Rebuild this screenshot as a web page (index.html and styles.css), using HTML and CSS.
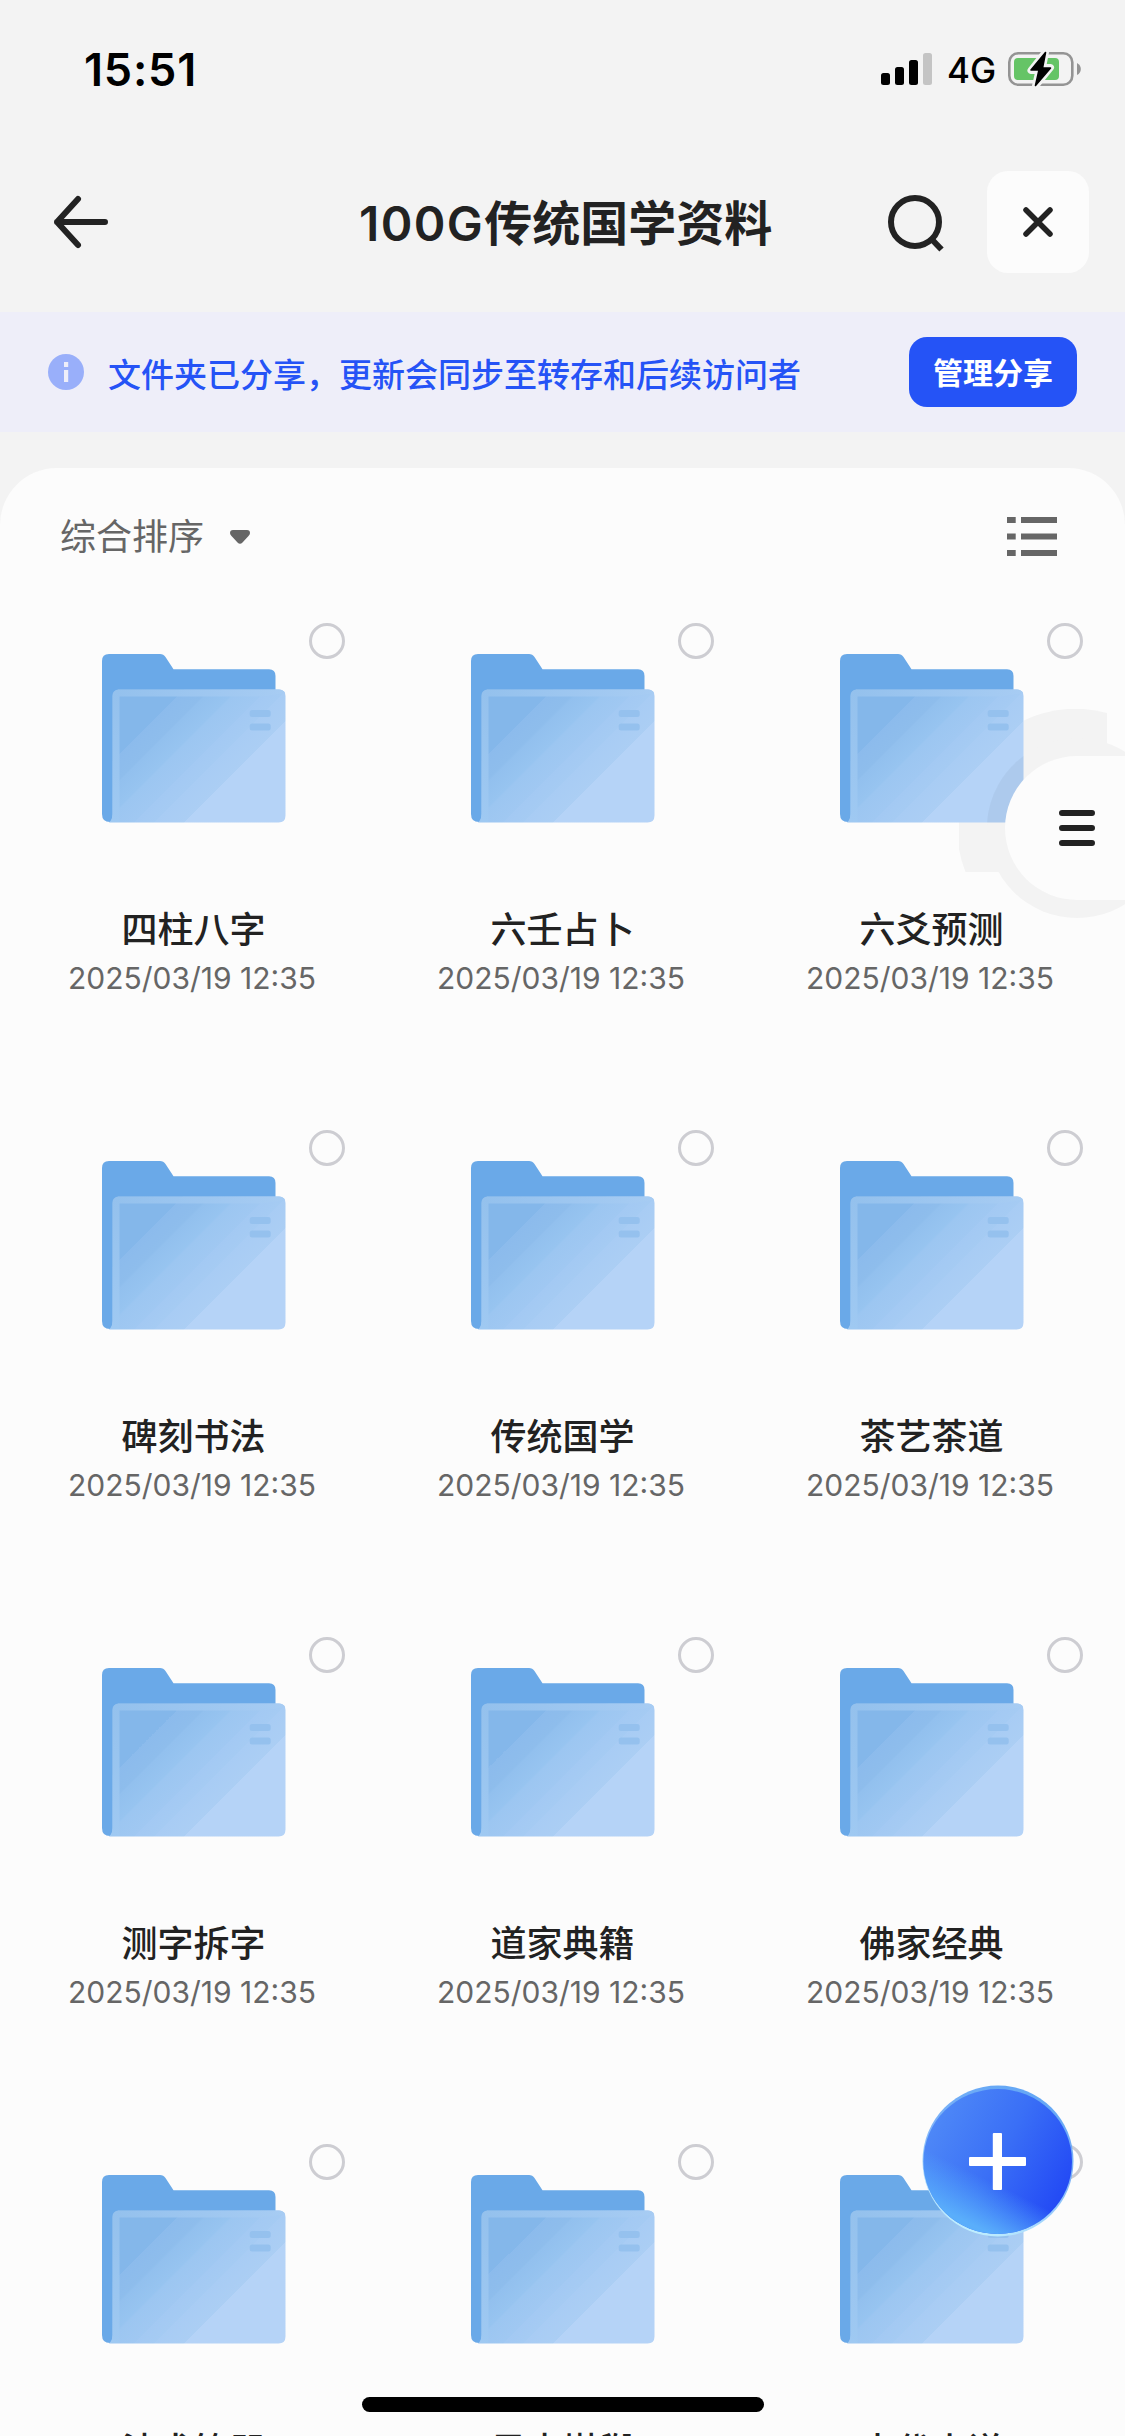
FILE: index.html
```html
<!DOCTYPE html>
<html lang="zh-CN">
<head>
<meta charset="utf-8">
<title>100G传统国学资料</title>
<link rel="stylesheet" href="styles.css">
</head>
<body>
<svg width="0" height="0" class="defs">
  <defs>
    <linearGradient id="front" gradientUnits="userSpaceOnUse" x1="25" y1="25" x2="150" y2="150">
      <stop offset="0" stop-color="#84b7ea"/><stop offset=".268" stop-color="#84b7ea"/>
      <stop offset=".268" stop-color="#8cbbec"/><stop offset=".37" stop-color="#8ebdec"/>
      <stop offset=".38" stop-color="#92c0ee"/><stop offset=".48" stop-color="#97c4f0"/>
      <stop offset=".49" stop-color="#9cc6f1"/><stop offset=".6" stop-color="#a0c8f2"/>
      <stop offset=".6" stop-color="#a3c9f3"/><stop offset=".68" stop-color="#a5cbf3"/>
      <stop offset=".68" stop-color="#a8ccf4"/><stop offset=".8" stop-color="#abcef4"/>
      <stop offset=".804" stop-color="#b5d3f7"/><stop offset="1" stop-color="#b5d3f7"/>
    </linearGradient>
    <linearGradient id="edgeLeft" x1="0" y1="0" x2="0" y2="1">
      <stop offset="0" stop-color="#94c1ed"/><stop offset="1" stop-color="#9fc9f2"/>
    </linearGradient>
    <linearGradient id="edgeTop" x1="0" y1="0" x2="1" y2="0">
      <stop offset="0" stop-color="#94c1ed"/><stop offset="1" stop-color="#a7ccf3"/>
    </linearGradient>
    <symbol id="folder" viewBox="0 0 184 169">
      <path fill="#6aa9e8" d="M7 0H58Q61.500 0 63.500 3L71.500 15.300H167Q173.500 15.300 173.500 22V60H20V161Q17 168 8 168Q0 168 0 160V7Q0 0 7 0Z"/>
      <path fill="url(#front)" d="M17 35.500H177Q183.500 35.500 183.500 42V161.500Q183.500 168.500 176.500 168.500H7Q10.500 166 10.500 160V42Q10.500 35.500 17 35.500Z"/>
      <path fill="url(#edgeTop)" d="M17 35.500H177Q181 35.500 183 39L160 42.500H13Q13 36.500 17 35.500Z"/>
      <path fill="url(#edgeLeft)" d="M10.500 42Q10.500 36 17 35.500L17.500 42V168H8Q10.500 165 10.500 160Z"/>
      <rect x="147.700" y="56" width="21" height="7" rx="2.500" fill="#95c1ee"/>
      <rect x="147.700" y="69.500" width="21" height="7" rx="2.500" fill="#95c1ee"/>
    </symbol>
    <linearGradient id="fabFill" x1="0.050" y1="0.250" x2="0.950" y2="0.720">
      <stop offset="0" stop-color="#4e88f7"/><stop offset=".5" stop-color="#3a6ff6"/><stop offset="1" stop-color="#234af5"/>
    </linearGradient>
    <linearGradient id="fabGlow" x1=".54" y1=".68" x2=".38" y2="1">
      <stop offset="0" stop-color="#56aefb" stop-opacity="0"/><stop offset=".9" stop-color="#5aaefb"/>
    </linearGradient>
    <linearGradient id="fabRim" x1=".7" y1="0" x2=".3" y2="1">
      <stop offset="0" stop-color="#62a6f5"/><stop offset=".45" stop-color="#7fb4f8"/><stop offset="1" stop-color="#c3f2ff"/>
    </linearGradient>
  </defs>
</svg>

<div class="screen">
  <header class="status">
    <span class="clock">15:51</span>
    <div class="indicators">
      <svg width="51" height="34" viewBox="0 0 51 34">
        <rect x="0" y="21" width="9" height="12" rx="2.500"/><rect x="14" y="15" width="9" height="18" rx="2.500"/><rect x="28" y="8" width="9" height="25" rx="2.500"/><rect x="42" y="1" width="9" height="32" rx="2.500" fill="#c4c4c4"/>
      </svg>
      <span class="network">4G</span>
      <svg width="74" height="38" viewBox="0 0 74 38">
        <rect x="1.300" y="3.300" width="63" height="31.500" rx="9" fill="none" stroke="#949494" stroke-width="2.600"/>
        <path d="M69 13Q72.800 15 72.800 19T69 25Z" fill="#949494"/>
        <rect x="6" y="8" width="45" height="22" rx="4" fill="#65c466"/>
        <path d="M37.500 2L23 20.500H31L27.500 36L42.500 17.500H34.500Z" fill="#000" stroke="#f3f3f3" stroke-width="7" stroke-linejoin="round"/>
        <path d="M37.500 2.500L23 20H31L27.500 35.500L42.500 18H34.500Z" stroke="#000" stroke-width="1.600" stroke-linejoin="round"/>
      </svg>
    </div>
  </header>

  <nav class="titlebar">
    <svg class="back" width="60" height="56" viewBox="0 0 60 56" fill="none" stroke="#222" stroke-width="6" stroke-linecap="round" stroke-linejoin="round"><path d="M27 5L6 28L27 51M6 28H54"/></svg>
    <h1><span class="latin">100G</span>传统国学资料</h1>
    <div class="actions">
      <svg width="60" height="60" viewBox="0 0 60 60" fill="none" stroke="#222" stroke-width="6"><ellipse cx="30" cy="30" rx="24" ry="24"/><path d="M45.500 46L56.500 57.500"/></svg>
      <button class="close"><svg width="32" height="32" viewBox="0 0 32 32" fill="none" stroke="#222" stroke-width="5.500" stroke-linecap="round"><path d="M4 4L28 28M28 4L4 28"/></svg></button>
    </div>
  </nav>

  <section class="notice">
    <svg width="36" height="36" viewBox="0 0 36 36"><circle cx="18" cy="18" r="18" fill="#99affa"/><path d="M16 8h4.200v5H16zM16 16h4.200v12H16z" fill="#eeeef9"/></svg>
    <p>文件夹已分享，更新会同步至转存和后续访问者</p>
    <button class="manage">管理分享</button>
  </section>

  <main class="panel">
    <svg class="halo" width="166" height="210" viewBox="0 0 166 210" fill="#f3f3f3"><path d="M6.500 163A118.500 119 0 0 1 148 4V163Z"/><circle cx="118" cy="119" r="90"/></svg>
    <div class="sortbar">
      <span class="sort">综合排序<svg width="20" height="14" viewBox="0 0 20 14"><path d="M3 0H17Q20 0 20 3Q20 4.500 18.500 6L12.500 12.500Q10 15 7.500 12.500L1.500 6Q0 4.500 0 3Q0 0 3 0Z" fill="#666"/></svg></span>
      <svg width="50" height="39" viewBox="0 0 50 39" fill="#666"><path d="M0 0h8.700v6H0zM14 0h36v6H14zM0 16.500h8.700v6H0zM14 16.500h36v6H14zM0 33h8.700v6H0zM14 33h36v6H14z"/></svg>
    </div>
    <ul class="grid">
      <li class="item"><i class="radio"></i><svg class="folder"><use href="#folder"/></svg><b>四柱八字</b><time>2025/03/19 12:35</time></li>
      <li class="item"><i class="radio"></i><svg class="folder"><use href="#folder"/></svg><b>六壬占卜</b><time>2025/03/19 12:35</time></li>
      <li class="item"><i class="radio"></i><svg class="folder"><use href="#folder"/></svg><b>六爻预测</b><time>2025/03/19 12:35</time></li>
      <li class="item"><i class="radio"></i><svg class="folder"><use href="#folder"/></svg><b>碑刻书法</b><time>2025/03/19 12:35</time></li>
      <li class="item"><i class="radio"></i><svg class="folder"><use href="#folder"/></svg><b>传统国学</b><time>2025/03/19 12:35</time></li>
      <li class="item"><i class="radio"></i><svg class="folder"><use href="#folder"/></svg><b>茶艺茶道</b><time>2025/03/19 12:35</time></li>
      <li class="item"><i class="radio"></i><svg class="folder"><use href="#folder"/></svg><b>测字拆字</b><time>2025/03/19 12:35</time></li>
      <li class="item"><i class="radio"></i><svg class="folder"><use href="#folder"/></svg><b>道家典籍</b><time>2025/03/19 12:35</time></li>
      <li class="item"><i class="radio"></i><svg class="folder"><use href="#folder"/></svg><b>佛家经典</b><time>2025/03/19 12:35</time></li>
      <li class="item"><i class="radio"></i><svg class="folder"><use href="#folder"/></svg><b>法术符咒</b></li>
      <li class="item"><i class="radio"></i><svg class="folder"><use href="#folder"/></svg><b>风水堪舆</b></li>
      <li class="item"><i class="radio"></i><svg class="folder"><use href="#folder"/></svg><b>古代小说</b></li>
    </ul>
  </main>

  <svg class="drawer" width="138" height="180" viewBox="0 0 138 180">
    <path d="M0 84.500A90 90 0 0 1 36.500 18V84.500Z" fill="#000" fill-opacity=".04"/>
    <path d="M138 18H90A72 72 0 0 0 90 162H138Z" fill="#fcfcfc"/>
    <path d="M75 75H105M75 90H105M75 105H105" stroke="#222" stroke-width="6" stroke-linecap="round"/>
  </svg>

  <svg class="fab" width="152" height="152" viewBox="0 0 152 152">
    <circle cx="76" cy="76" r="75.500" fill="url(#fabRim)"/>
    <ellipse cx="75.700" cy="76.500" rx="74.300" ry="72.500" fill="url(#fabFill)"/>
    <ellipse cx="75.700" cy="76.500" rx="74.300" ry="72.500" fill="url(#fabGlow)"/>
    <path d="M48 72H70.800V49Q70.800 48 71.800 48H79Q80 48 80 49V72H103Q104 72 104 73V80Q104 81 103 81H80V104Q80 105 79 105H71.800Q70.800 105 70.800 104V81H48Q47 81 47 80V73Q47 72 48 72Z" fill="#fff"/>
  </svg>
  <div class="home"></div>
</div>
</body>
</html>
```
FILE: styles.css
```css
* { box-sizing: border-box; }
body { margin: 0; background: #f3f3f3; font-family: Inter, "Noto Sans CJK SC", sans-serif; color: #222; }
svg { display: block; flex: none; }
button { border: 0; padding: 0; font: inherit; }
.defs { position: absolute; }
.screen { position: relative; width: 1125px; height: 2436px; overflow: hidden; display: flex; flex-direction: column; }

.status { height: 132px; padding: 0 43px 0 84px; display: flex; justify-content: space-between; color: #000; }
.clock { padding-top: 43px; font-size: 45px; line-height: 54px; font-weight: 600; letter-spacing: .8px; }
.indicators { display: flex; align-items: center; height: 138px; }
.network { margin-left: 15px; width: 48px; margin-right: 13px; font-size: 35px; line-height: 40px; padding-top: 2px; font-weight: 450; }
.titlebar { height: 180px; padding: 0 36px 0 51px; display: flex; align-items: center; }
.titlebar h1 { margin: 3px auto 0 248px; font-size: 48px; line-height: 60px; font-weight: 600; white-space: nowrap; }
.latin { letter-spacing: 1.4px; }
.actions { display: flex; align-items: center; gap: 42px; }
.close { width: 102px; height: 102px; border-radius: 21px; background: #fcfcfc; display: flex; align-items: center; justify-content: center; }

.notice { height: 120px; padding: 0 48px; display: flex; align-items: center; background: #eeeef9; color: #2553f6; }
.notice p { margin: 0 auto 0 24px; padding-top: 5px; font-size: 33px; line-height: 48px; font-weight: 500; white-space: nowrap; }
.manage { width: 168px; height: 70px; border-radius: 18px; background: #2553f6; color: #fff; font-size: 30px; font-weight: 700; line-height: 72px; }

.panel { position: relative; margin-top: 36px; height: 1968px; border-radius: 57px 57px 0 0; background: #fcfcfc; }
.halo { position: absolute; left: 959px; top: 241px; }
.sortbar { height: 147px; padding: 0 68px 10px 60px; display: flex; align-items: center; justify-content: space-between; color: #666; }
.sort { display: flex; align-items: center; gap: 26px; font-size: 36px; line-height: 50px; padding-top: 1px; }
.grid { position: relative; margin: 0; padding: 0 9px; list-style: none; display: grid; grid-template-columns: repeat(3, 369px); grid-auto-rows: 507px; }
.item { position: relative; padding-top: 39px; display: flex; flex-direction: column; align-items: center; }
.radio { position: absolute; left: 300px; top: 8px; width: 36px; height: 36px; border: 3.5px solid #cdcdd2; border-radius: 50%; }
.folder { width: 184px; height: 169px; }
.item b { margin-top: 82px; font-size: 36px; line-height: 50px; font-weight: 500; }
.item time { margin-top: 5px; padding-right: 3px; font-size: 30px; line-height: 36px; color: #666; }

.drawer { position: absolute; left: 987px; top: 738px; }
.fab { position: absolute; left: 922px; top: 2085px; }
.home { position: absolute; left: 362px; top: 2397px; width: 402px; height: 15px; border-radius: 8px; background: #000; }
```
